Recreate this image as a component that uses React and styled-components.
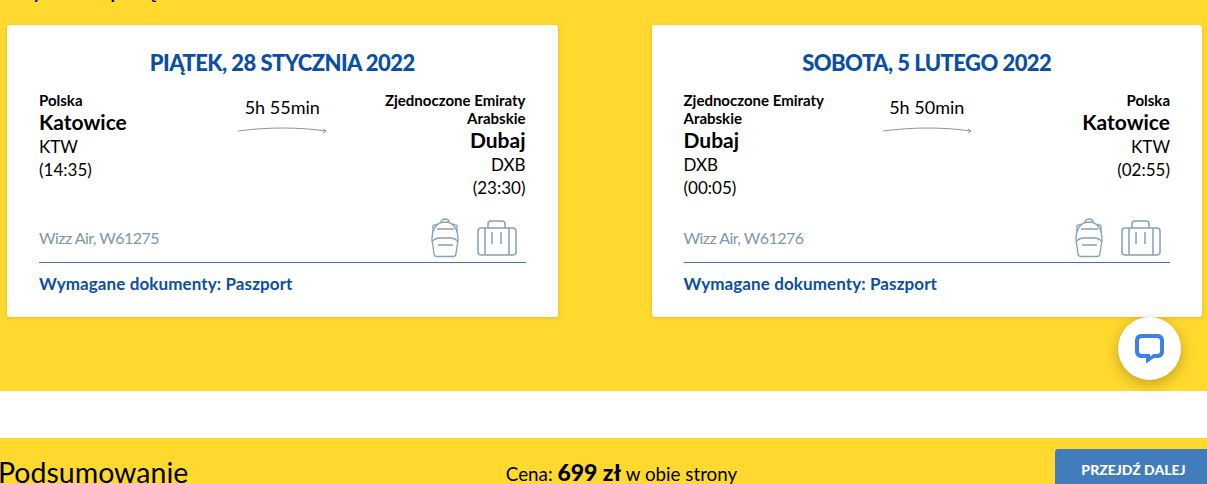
import React from 'react';
import styled, { createGlobalStyle } from 'styled-components';

const BLUE = '#0a4fa3';
const GREY = '#7f95ad';
const ICON_GREY = '#86a0b9';

const GlobalStyle = createGlobalStyle`
    html, body {
        margin: 0;
        padding: 0;
        height: 100%;
        overflow: hidden;
        background: #fff;
        font-family: Lato, "Liberation Sans", sans-serif;
        color: #000;
    }
`;

const Page = styled.div`
    width: 1207px;
    height: 484px;
    overflow: hidden;
    position: relative;
`;

const FlightsSection = styled.section`
    display: flow-root;
    background: #ffd92e;
    height: 391px;
    box-sizing: border-box;
    padding: 0 5px 0 7px;
`;

const SectionHeading = styled.h2`
    margin: -26px 0 21px;
    height: 30px;
    font-size: 24px;
    line-height: 30px;
    font-weight: 400;
    white-space: nowrap;
`;

const Cards = styled.div`
    display: flex;
    justify-content: space-between;
`;

const Card = styled.article`
    width: 550.5px;
    height: 292px;
    box-sizing: border-box;
    padding: 23px 32px 0;
    background: #fff;
    border-radius: 3px;
    box-shadow: 0 1px 4px rgba(0, 0, 0, 0.12);
`;

const CardDate = styled.h3`
    margin: 0 0 13px;
    text-align: center;
    color: ${BLUE};
    font-size: 22px;
    line-height: 30px;
    font-weight: 900;
    letter-spacing: -0.55px;
`;

const Route = styled.div`
    display: grid;
    grid-template-columns: 1fr 1fr 1fr;
    height: 126px;
`;

const Place = styled.div`
    text-align: ${(p) => (p.$right ? 'right' : 'left')};
    font-size: 17px;
    line-height: 23px;
`;

const Country = styled.div`
    font-size: 15px;
    line-height: 18px;
    font-weight: 700;
    margin-right: ${(p) => (p.$right ? '0' : '-30px')};
    margin-left: ${(p) => (p.$right ? '-30px' : '0')};
`;

const City = styled.div`
    font-size: 21px;
    line-height: 26px;
    font-weight: 700;
`;

const Duration = styled.div`
    display: flex;
    flex-direction: column;
    align-items: center;
    padding-top: 4px;
    font-size: 18px;
    line-height: 24px;
`;

const DurationArrow = styled.svg`
    display: block;
    margin-top: 6px;
    width: 90px;
    height: 10px;
`;

const CardInfo = styled.div`
    display: flex;
    align-items: center;
    justify-content: space-between;
    height: 45px;
    padding-right: 9px;
    border-bottom: 1px solid #3a74ad;
`;

const Airline = styled.span`
    margin-bottom: 4px;
    color: ${GREY};
    font-size: 16px;
    letter-spacing: -0.55px;
`;

const Baggage = styled.div`
    display: flex;
    align-items: center;
    gap: 17px;
    padding-bottom: 4px;
`;

const Documents = styled.div`
    margin-top: 11px;
    color: ${BLUE};
    font-size: 17px;
    line-height: 20px;
    font-weight: 700;
    letter-spacing: 0.1px;
`;

const Gap = styled.div`
    height: 47px;
    background: #fff;
`;

const Summary = styled.section`
    position: relative;
    height: 46px;
    background: #ffd92e;
    display: grid;
    grid-template-columns: 1fr 1fr 1fr;
    align-items: start;
`;

const SummaryTitle = styled.h2`
    margin: 17px 0 0 -2px;
    font-size: 28.5px;
    line-height: 34px;
    font-weight: 400;
    white-space: nowrap;
`;

const Price = styled.div`
    margin-top: 21px;
    padding-left: 36px;
    text-align: center;
    font-size: 18.8px;
    line-height: 26px;
    white-space: nowrap;
`;

const PriceValue = styled.b`
    font-size: 23px;
    font-weight: 900;
`;

const NextButton = styled.button`
    justify-self: end;
    margin-top: 11px;
    width: 152px;
    height: 40px;
    padding: 0 0 0 5px;
    border: 0;
    border-radius: 3px 0 0 0;
    background: #417dbb;
    color: #fff;
    font-family: inherit;
    font-size: 14px;
    font-weight: 900;
`;

const ChatBubble = styled.button`
    position: absolute;
    left: 1118px;
    top: 317px;
    width: 63px;
    height: 63px;
    display: flex;
    align-items: center;
    justify-content: center;
    padding: 0;
    border: 0;
    border-radius: 50%;
    background: #fff;
    box-shadow: 0 4px 14px rgba(0, 0, 0, 0.25);
`;

const Backpack = () => (
    <svg width="30" height="40" viewBox="0 0 30 40" fill="none" stroke={ICON_GREY} strokeWidth="1.3">
        <path d="M11 4c0-4 8-4 8 0" />
        <path d="M7 6L3 7.500V14M23 6l4 1.500V14" />
        <path d="M7 38.500h16c2 0 3-1 3-3l2-13.500C28 10 23 4 15 4S2 10 2 22l2 13.500c0 2 1 3 3 3z" />
        <path d="M2 24c2-3 6-4 8-4h10c2 0 6 1 8 4" />
        <path d="M7 11h17M8 27h15" />
    </svg>
);

const Suitcase = () => (
    <svg width="40" height="36" viewBox="0 0 40 36" fill="none" stroke={ICON_GREY} strokeWidth="1.5">
        <path d="M11 8V4c0-2 1-3 3-3h11c2 0 3 1 3 3v4" />
        <rect x="1" y="8" width="38" height="27" rx="3" />
        <path d="M8 8v27M32 8v27M15 12v12M24 12v12" />
    </svg>
);

const Flight = ({ date, from, to, duration, airline }) => (
    <Card>
        <CardDate>{date}</CardDate>
        <Route>
            <Place>
                <Country>{from.country}</Country>
                <City>{from.city}</City>
                <div>{from.code}</div>
                <div>({from.time})</div>
            </Place>
            <Duration>
                {duration}
                <DurationArrow viewBox="0 0 90 10" fill="none" stroke="#777" strokeWidth="0.8">
                    <path d="M1 6C31 2 61 2 89 6M86 4l3 2-3 2" />
                </DurationArrow>
            </Duration>
            <Place $right>
                <Country $right>{to.country}</Country>
                <City>{to.city}</City>
                <div>{to.code}</div>
                <div>({to.time})</div>
            </Place>
        </Route>
        <CardInfo>
            <Airline>{airline}</Airline>
            <Baggage>
                <Backpack />
                <Suitcase />
            </Baggage>
        </CardInfo>
        <Documents>Wymagane dokumenty: Paszport</Documents>
    </Card>
);

const KTW = { country: 'Polska', city: 'Katowice', code: 'KTW' };
const DXB = { country: 'Zjednoczone Emiraty Arabskie', city: 'Dubaj', code: 'DXB' };

export default function App() {
    return (
        <Page>
            <GlobalStyle />
            <FlightsSection>
                <SectionHeading>Wybrane połączenia</SectionHeading>
                <Cards>
                    <Flight
                        date="PIĄTEK, 28 STYCZNIA 2022"
                        from={{ ...KTW, time: '14:35' }}
                        to={{ ...DXB, time: '23:30' }}
                        duration="5h 55min"
                        airline="Wizz Air, W61275"
                    />
                    <Flight
                        date="SOBOTA, 5 LUTEGO 2022"
                        from={{ ...DXB, time: '00:05' }}
                        to={{ ...KTW, time: '02:55' }}
                        duration="5h 50min"
                        airline="Wizz Air, W61276"
                    />
                </Cards>
            </FlightsSection>
            <Gap />
            <Summary>
                <SummaryTitle>Podsumowanie</SummaryTitle>
                <Price>
                    Cena: <PriceValue>699 zł</PriceValue> w obie strony
                </Price>
                <NextButton>PRZEJDŹ DALEJ</NextButton>
            </Summary>
            <ChatBubble aria-label="Czat">
                <svg width="29" height="30" viewBox="0 0 29 30" fill="#3f7fe8">
                    <path
                        fillRule="evenodd"
                        d="M6 0h17a6 6 0 0 1 6 6v12a6 6 0 0 1-6 6h-4l-8 5.500V24H6a6 6 0 0 1-6-6V6a6 6 0 0 1 6-6zM7 4a3 3 0 0 0-3 3v10a3 3 0 0 0 3 3h8v2.500l3.500-2.500H22a3 3 0 0 0 3-3V7a3 3 0 0 0-3-3z"
                    />
                </svg>
            </ChatBubble>
        </Page>
    );
}
